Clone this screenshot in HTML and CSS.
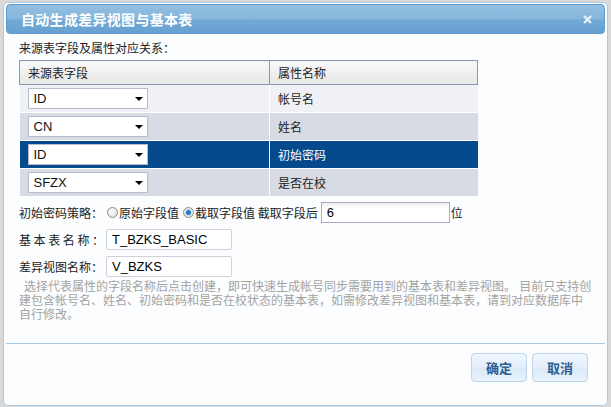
FILE: index.html
```html
<!DOCTYPE html>
<html>
<head>
<meta charset="utf-8">
<title>自动生成差异视图与基本表</title>
<link rel="stylesheet" href="styles.css">
</head>
<body>
<div class="dialog">
  <div class="dialog-title">
    <span class="title-text">自动生成差异视图与基本表</span>
    <a class="close" href="#"><svg width="9" height="9" viewBox="0 0 9 9"><path d="M1 1L8 8M8 1L1 8" stroke="#e8f1f9" stroke-width="2.4"/></svg></a>
  </div>

  <div class="dialog-body">
    <div class="caption">来源表字段及属性对应关系：</div>
    <table class="mapping" cellspacing="0">
      <tr><th class="col-src">来源表字段</th><th>属性名称</th></tr>
      <tr class="odd"><td><div class="select">ID<i class="arrow"></i></div></td><td>帐号名</td></tr>
      <tr class="even"><td><div class="select">CN<i class="arrow"></i></div></td><td>姓名</td></tr>
      <tr class="selected"><td><div class="select">ID<i class="arrow"></i></div></td><td>初始密码</td></tr>
      <tr class="even"><td><div class="select">SFZX<i class="arrow"></i></div></td><td>是否在校</td></tr>
    </table>

    <div class="field">
      <span class="label">初始密码策略：</span>
      <span class="radio"></span><span>原始字段值</span>
      <span class="radio checked"></span><span>截取字段值 截取字段后</span>
      <input class="text cut" type="text" value="6"><span>位</span>
    </div>
    <div class="field">
      <span class="label spaced">基本表名称：</span>
      <input class="text name" type="text" value="T_BZKS_BASIC">
    </div>
    <div class="field">
      <span class="label">差异视图名称：</span>
      <input class="text name" type="text" value="V_BZKS">
    </div>

    <div class="hint">
      <div class="hint-line first">选择代表属性的字段名称后点击创建，即可快速生成帐号同步需要用到的基本表和差异视图。 目前只支持创</div>
      <div class="hint-line">建包含帐号名、姓名、初始密码和是否在校状态的基本表，如需修改差异视图和基本表，请到对应数据库中</div>
      <div class="hint-line">自行修改。</div>
    </div>
  </div>

  <div class="dialog-footer">
    <button class="btn">确定</button>
    <button class="btn">取消</button>
  </div>
</div>
</body>
</html>
```

FILE: styles.css
```css
/* Dialog: generate diff view and base table */

body
{ margin: 0;
  background-color: #d9d9d9;
  font-family: "Noto Sans CJK SC", "Liberation Sans", sans-serif;
  font-size: 12px;
  color: #222;
}

div.dialog
{ box-sizing: border-box;
  width: 605px;
  height: 404px;
  margin: 2px 0 0 3px;
  padding: 1px 2px 0 2px;
  border: 1px solid #a9cbe7;
  border-radius: 5px;
  background-color: #fbfdfe;
  display: flex;
  flex-direction: column;
}

/* Title bar */

div.dialog-title
{ box-sizing: border-box;
  height: 30px;
  padding: 0 10px 0 14px;
  border: 1px solid #5c9ad0;
  border-radius: 4px;
  background: linear-gradient(#93bfe1, #86b6dc 48%, #72a9d5 55%, #66a1d1);
  display: flex;
  align-items: center;
  justify-content: space-between;
}

span.title-text
{ color: #fff;
  font-size: 14px;
  font-weight: bold;
  letter-spacing: 0.3px;
}

a.close
{ display: flex;
  margin-right: 2px;
}

/* Body */

div.dialog-body
{ flex: 1;
  padding: 6px 0 0 13px;
}

div.caption
{ line-height: 16px;
}

table.mapping
{ width: 459px;
  margin-top: 4px;
  border-collapse: collapse;
}

table.mapping th
{ height: 23px;
  padding: 0 0 0 8px;
  text-align: left;
  font-weight: normal;
  border: 1px solid #8c99b2;
  background: linear-gradient(#f9f9f9, #e6e6e6);
}

table.mapping th.col-src
{ width: 241px;
}

table.mapping td
{ height: 27px;
  padding: 0 0 0 8px;
  border-bottom: 1px solid #fff;
}

table.mapping td + td
{ border-left: 1px solid #fff;
}

tr.odd td { background-color: #f0f1f6; }
tr.even td { background-color: #d7dbe3; }
tr.selected td { background-color: #064a8e; color: #fff; }

div.select
{ box-sizing: border-box;
  width: 120px;
  height: 21px;
  padding: 0 0 0 5px;
  border: 1px solid #b7bdcd;
  background-color: #fff;
  color: #111;
  font-family: "Liberation Sans", sans-serif;
  font-size: 13px;
  line-height: 19px;
  position: relative;
}

i.arrow
{ position: absolute;
  right: 4px;
  top: 8px;
  border-left: 4px solid transparent;
  border-right: 4px solid transparent;
  border-top: 4px solid #000;
}

/* Form rows */

div.field
{ display: flex;
  align-items: center;
  height: 21px;
  margin-top: 5px;
  white-space: nowrap;
}

div.field + div.field
{ margin-top: 6px;
}

span.label
{ width: 87px;
}

span.spaced
{ letter-spacing: 2.6px;
}

span.radio
{ box-sizing: border-box;
  width: 11px;
  height: 11px;
  margin: 0 1px 0 1px;
  border: 1px solid #8e8e8e;
  border-radius: 50%;
  background: radial-gradient(circle at 40% 35%, #fff, #d8d8d8);
}

span.checked
{ margin-left: 4px;
  background: radial-gradient(circle, #1b6cc0 0, #2d7fd0 2px, #d0d8e0 3px, #f2f2f2 5px);
}

input.text
{ box-sizing: border-box;
  height: 21px;
  padding: 0 5px;
  border: 1px solid #cfd2d8;
  border-radius: 2px;
  background-color: #fff;
  font-family: "Liberation Sans", sans-serif;
  font-size: 13px;
  color: #000;
  outline: none;
}

input.cut
{ width: 129px;
  margin: 0 1px 0 3px;
  border-color: #a9acc4;
  border-radius: 0;
  background: linear-gradient(#eeeeee, #fff 6px);
}

input.name
{ width: 126px;
}

div.hint
{ margin-top: 3px;
  font-family: "Liberation Sans", "Noto Sans CJK SC", sans-serif;
  color: #a3a3a3;
  white-space: nowrap;
}

div.hint-line
{ height: 14px;
  line-height: 14px;
}

div.first
{ padding-left: 5px;
}

/* Footer with buttons */

div.dialog-footer
{ height: 52px;
  padding: 9px 17px 0 0;
  border-top: 1px solid #a7cbe6;
  display: flex;
  justify-content: flex-end;
  align-items: flex-start;
  gap: 5px;
}

button.btn
{ width: 56px;
  height: 29px;
  border: 1px solid #bdd4ec;
  border-radius: 4px;
  background: linear-gradient(#eef5fd, #e6f0fb 45%, #dbe9f8 55%, #e9f2fd);
  color: #2b5e93;
  font-family: "Noto Sans CJK SC", sans-serif;
  font-size: 13px;
  font-weight: bold;
}
```
